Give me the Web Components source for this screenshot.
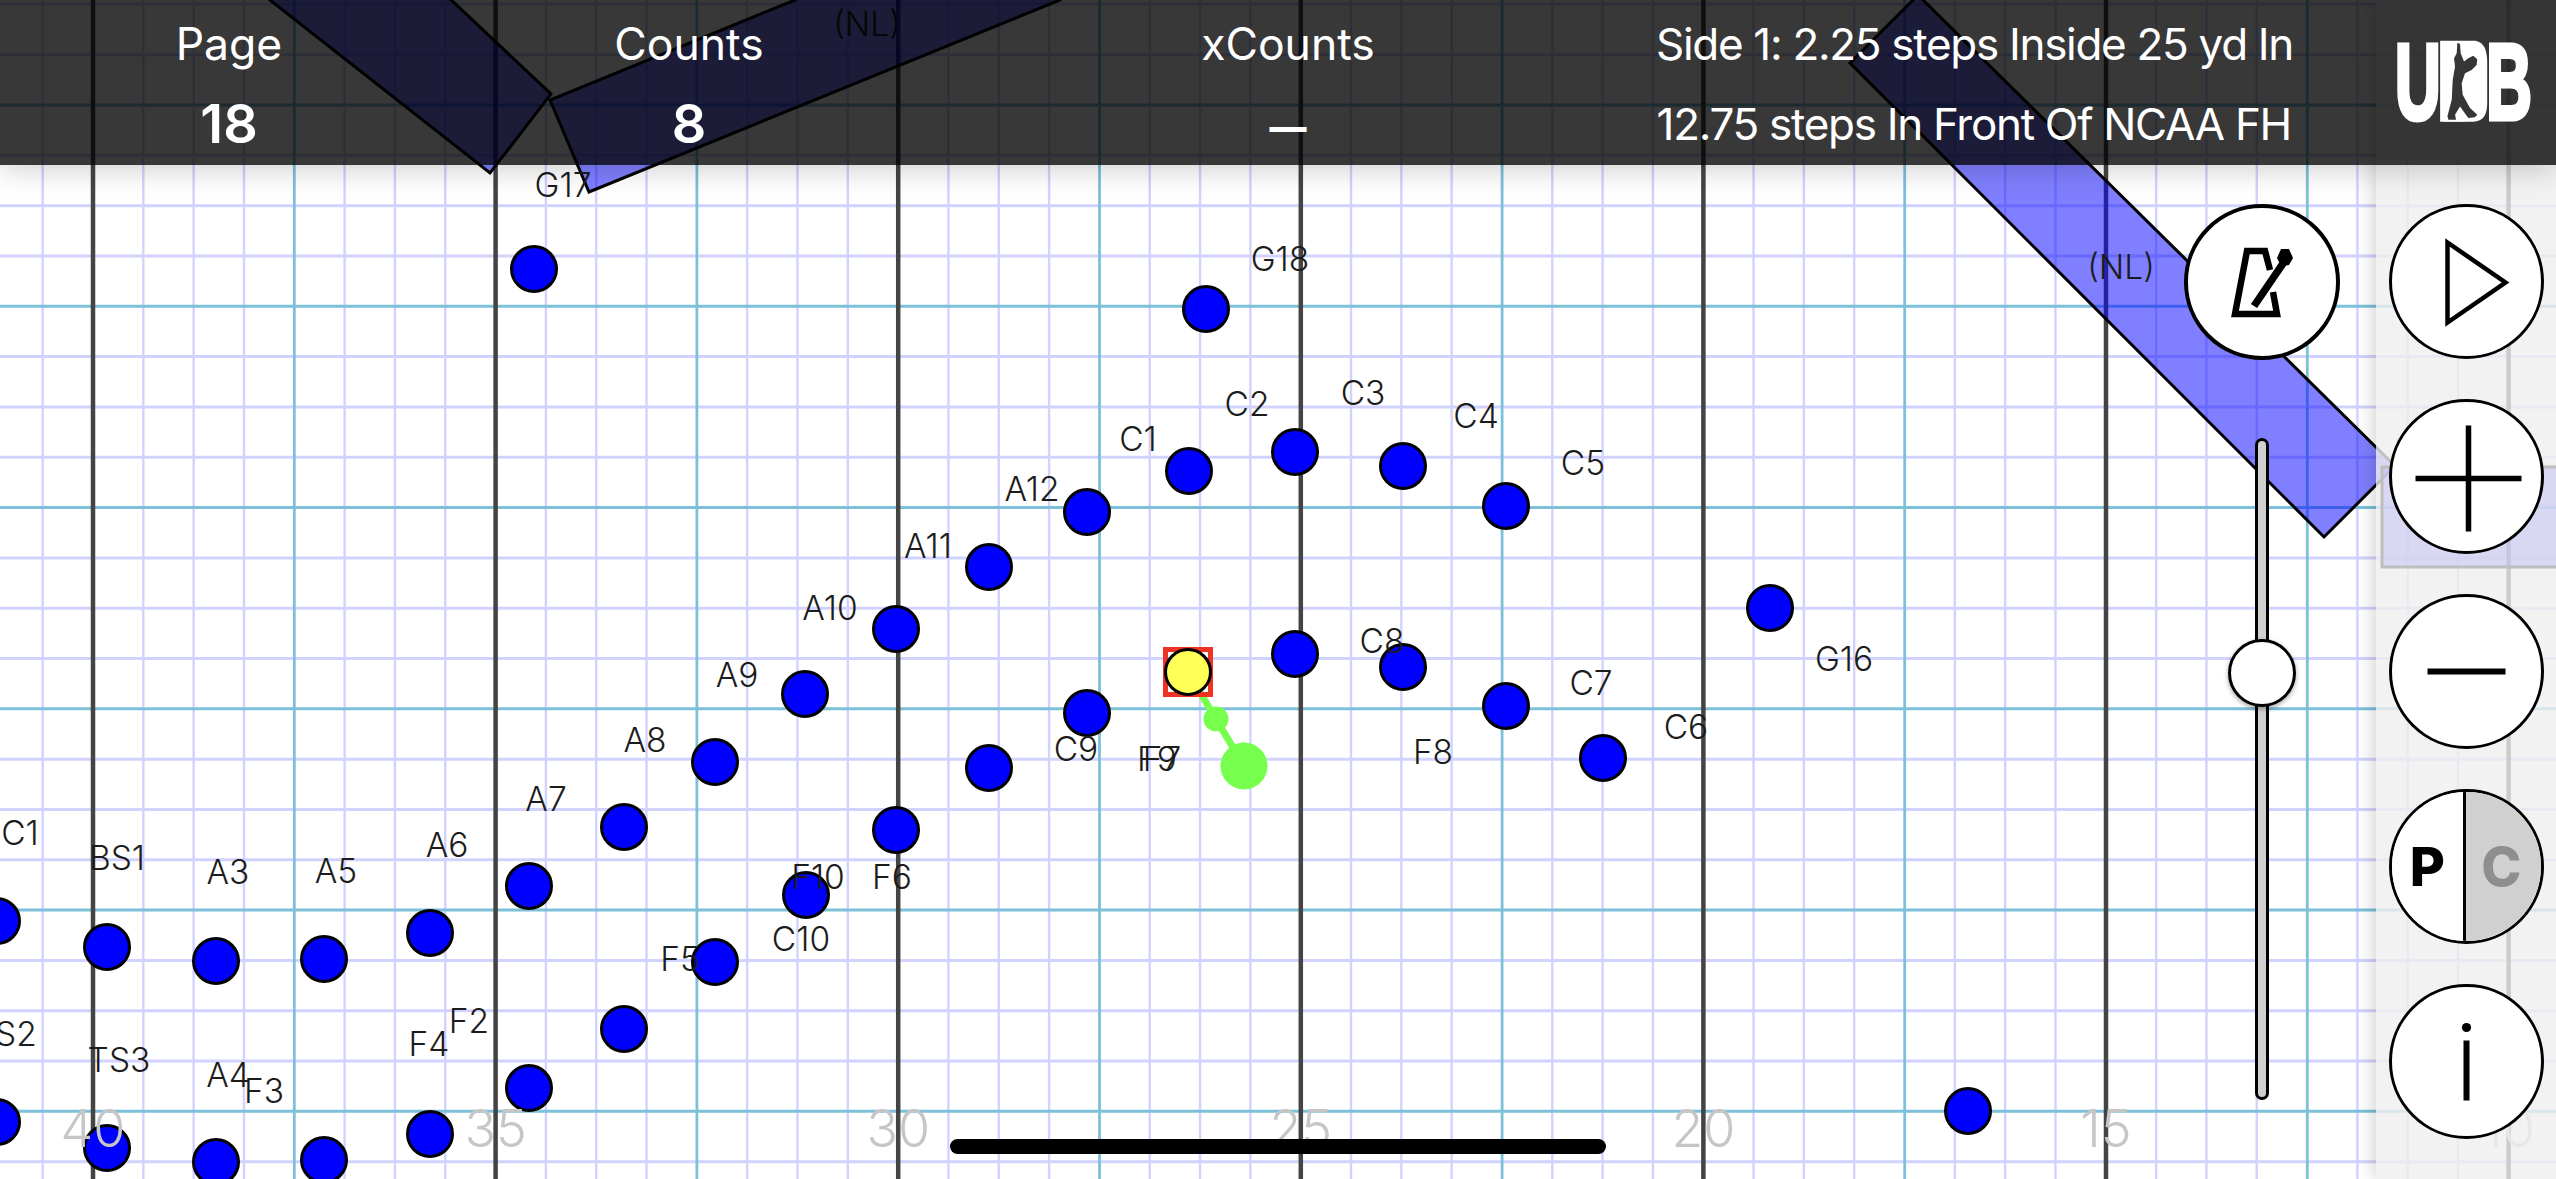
<!DOCTYPE html>
<html>
<head>
<meta charset="utf-8">
<title>UDB drill</title>
<style>
    html, body {
        margin: 0;
        padding: 0;
        width: 2556px;
        height: 1179px;
        overflow: hidden;
        background: #fff;
        font-family: Inter, "Liberation Sans", sans-serif;
    }
</style>
</head>
<body>
<drill-app></drill-app>

<script>
const XS = [93, 495.6, 898.2, 1300.8, 1703.4, 2106, 2508.6];
const STEP = 50.32;

// performers: x, y
const DOTS = [
    [534,269],[1206,309],[1189,471],[1295,452],[1403,466],[1506,506],[1087,512],[989,567],[896,629],
    [805,694],[715,762],[624,827],[529,886],[430,933],[324,959],[216,961],[107,947],[-3,921],
    [1295,654],[1403,667],[1506,706],[1603,758],[1770,608],[1087,713],[989,768],[896,830],[806,895],
    [715,962],[624,1029],[529,1088],[430,1134],[324,1160],[216,1162],[107,1148],[-3,1122],[1968,1111]
];

// label, center x, center y
const LABELS = [
    ['G17',563,185],['G18',1280,259],['C1',1138,439],['C2',1247,404],['C3',1363,393],['C4',1476,416],
    ['C5',1583,463],['A12',1032,489],['A11',928,546],['A10',830,608],['A9',737,675],['A8',645,740],
    ['A7',546,799],['A6',447,845],['A5',336,871],['A3',228,872],['BS1',117,858],['C1',20,833],
    ['C8',1382,641],['C7',1591,683],['C6',1686,727],['G16',1844,659],['F8',1433,752],['F7',1162,759],
    ['F9',1157,759],['C9',1076,749],['F6',892,877],['F10',818,877],['C10',801,939],['F5',680,959],
    ['F2',469,1021],['F4',429,1044],['F3',264,1091],['A4',228,1075],['TS3',119,1060],['BS2',5,1034],
    ['(NL)',2121,267],['(NL)',867,24]
];

const YARDS = ['40', '35', '30', '25', '20', '15', '10'];

const FORMS = [
    '270,0 490,173 551,94 430,-20 270,-20',
    '550,100 589,192 1060,0 1060,-20 795,-20 795,0',
    '1850,63 1918,-5 2395,466 2324,537',
    '2382,467 2620,467 2620,567 2382,567'
];

class DrillField extends HTMLElement {
    connectedCallback() {
        let lines = '';
        // thin lines first so the teal and dark ones sit on top
        for (let k = -1; k < 52; k++) {
            const x = 93 + (k - 2) * STEP;
            if (k % 4 !== 2) lines += `<line x1="${x}" x2="${x}" y1="0" y2="1179" class="thin"/>`;
        }
        for (let k = -2; k < 24; k++) {
            const y = 105 + k * STEP;
            if (k % 4 !== 0) lines += `<line y1="${y}" y2="${y}" x1="0" x2="2556" class="thin wide"/>`;
        }
        for (let k = 0; k < 7; k++) {
            const x = 294.3 + (k - 1) * 402.6;
            lines += `<line x1="${x}" x2="${x}" y1="0" y2="1179" class="teal"/>`;
        }
        for (let k = 0; k < 6; k++) {
            const y = 105 + k * 201.25;
            lines += `<line y1="${y}" y2="${y}" x1="0" x2="2556" class="teal"/>`;
        }
        XS.forEach(x => {
            lines += `<line x1="${x}" x2="${x}" y1="0" y2="1179" class="dark"/>`;
        });

        const forms = FORMS.map(p => `<polygon points="${p}" class="form"/>`).join('');
        const dots = DOTS.map(d => `<circle cx="${d[0]}" cy="${d[1]}" r="22.5" class="dot"/>`).join('');
        const labels = LABELS.map(l => `<text x="${l[1]}" y="${l[2]}" class="label">${l[0]}</text>`).join('');
        const yards = YARDS.map((t, i) => `<text x="${XS[i]}" y="1128" class="yard">${t}</text>`).join('');

        this.attachShadow({ mode: 'open' }).innerHTML = `
            <style>
                :host { display: block; width: 2556px; height: 1179px; }
                svg { display: block; }
                .thin { stroke: #d2d2ff; stroke-width: 2.4; }
                .wide { stroke-width: 3; }
                .teal { stroke: #7cc0da; stroke-width: 2.8; }
                .dark { stroke: #444; stroke-width: 4.5; }
                .form { fill: rgba(0, 0, 255, .5); stroke: #000; stroke-width: 3; }
                .dot { fill: #00f; stroke: #000; stroke-width: 3; }
                text { font-family: Inter, "Liberation Sans", sans-serif; text-anchor: middle; dominant-baseline: central; }
                .label { font-size: 33.5px; font-weight: 300; fill: #1c1c1c; }
                .yard { font-size: 52px; font-weight: 300; fill: #c6c6c6; }
            </style>
            <svg width="2556" height="1179" viewBox="0 0 2556 1179">
                ${lines}
                ${forms}
                <path d="M1188 672L1244 766" stroke="#77ff4d" stroke-width="7"/>
                <circle cx="1216" cy="719" r="12.5" fill="#77ff4d"/>
                <circle cx="1244" cy="766" r="23.5" fill="#77ff4d"/>
                ${dots}
                <rect x="1165.5" y="649.5" width="45" height="45" fill="none" stroke="#ee3524" stroke-width="5"/>
                <circle cx="1188" cy="672" r="22.5" fill="#ffff55" stroke="#000" stroke-width="3"/>
                ${labels}
                ${yards}
            </svg>
        `;
    }
}
customElements.define('drill-field', DrillField);

const statTemplate = document.createElement('template');
statTemplate.innerHTML = `
    <style>
        :host {
            display: flex;
            flex-direction: column;
            align-items: center;
            color: #fff;
        }
        .name {
            font-size: 44.5px;
            line-height: 88px;
            font-weight: 400;
        }
        .value {
            font-size: 54px;
            line-height: 72px;
            font-weight: 600;
        }
    </style>
    <div class="name"><slot name="name"></slot></div>
    <div class="value"><slot name="value"></slot></div>
`;
class StatCell extends HTMLElement {
    connectedCallback() {
        this.attachShadow({ mode: 'open' }).appendChild(statTemplate.content.cloneNode(true));
    }
}
customElements.define('stat-cell', StatCell);

const logoTemplate = document.createElement('template');
logoTemplate.innerHTML = `
    <style>
        :host {
            display: block;
            position: relative;
            width: 136px;
            height: 83px;
        }
        .word {
            position: absolute;
            left: -2px;
            top: -23px;
            font: bold 108px/130px "Liberation Sans", sans-serif;
            color: #fff;
            -webkit-text-stroke: 5px #fff;
            transform: scaleX(.585);
            transform-origin: 0 0;
            white-space: nowrap;
        }
        svg { position: absolute; left: 0; top: 0; }
    </style>
    <div class="word">UDB</div>
    <svg width="136" height="83" viewBox="170 60 410 250">
        <path d="M300 62H400C432 62 442 90 442 130V250C442 285 430 306 400 306H300Z" fill="#fff"/>
        <path d="M352 68L360 72 362 100 372 125 385 115 400 107 412 118 410 135 395 150 375 160 365 190 368 225 390 265 412 285 405 293 385 295 360 260 345 285 348 300 325 300 322 290 335 240 338 180 345 140 342 115 350 100Z" fill="#363636"/>
    </svg>
`;
class UdbLogo extends HTMLElement {
    connectedCallback() {
        this.attachShadow({ mode: 'open' }).appendChild(logoTemplate.content.cloneNode(true));
    }
}
customElements.define('udb-logo', UdbLogo);

const barTemplate = document.createElement('template');
barTemplate.innerHTML = `
    <style>
        :host {
            display: grid;
            grid-template-columns: 458px 462px 736px 635px 106px 136px;
            position: absolute;
            left: 0;
            top: 0;
            width: 2556px;
            height: 165px;
            background: rgba(0, 0, 0, .78);
            box-shadow: 0 2px 30px rgba(0, 0, 0, .22);
            color: #fff;
        }
        .side {
            grid-column: 4;
            text-align: right;
            font-size: 44px;
            letter-spacing: -1.3px;
            line-height: 80px;
            padding-top: 4px;
            white-space: nowrap;
        }
        udb-logo {
            grid-column: 6;
            margin-top: 40px;
        }
        .dash { font-size: 37px; font-weight: 800; vertical-align: 3px; }
    </style>
    <stat-cell><span slot="name">Page</span><span slot="value">18</span></stat-cell>
    <stat-cell><span slot="name">Counts</span><span slot="value">8</span></stat-cell>
    <stat-cell><span slot="name">xCounts</span><span slot="value" class="dash">—</span></stat-cell>
    <div class="side">
        <div>Side 1: 2.25 steps Inside 25 yd In</div>
        <div>12.75 steps In Front Of NCAA FH</div>
    </div>
    <udb-logo></udb-logo>
`;
class TopBar extends HTMLElement {
    connectedCallback() {
        this.attachShadow({ mode: 'open' }).appendChild(barTemplate.content.cloneNode(true));
    }
}
customElements.define('top-bar', TopBar);

const buttonTemplate = document.createElement('template');
buttonTemplate.innerHTML = `
    <style>
        :host {
            display: flex;
            align-items: center;
            justify-content: center;
            box-sizing: border-box;
            width: var(--size, 155px);
            height: var(--size, 155px);
            flex: none;
            border-radius: 50%;
            border: var(--ring, 3px) solid #000;
            background: #fff;
            overflow: hidden;
        }
    </style>
    <slot></slot>
`;
class RoundButton extends HTMLElement {
    connectedCallback() {
        this.attachShadow({ mode: 'open' }).appendChild(buttonTemplate.content.cloneNode(true));
    }
}
customElements.define('round-button', RoundButton);

const pcTemplate = document.createElement('template');
pcTemplate.innerHTML = `
    <style>
        :host {
            display: grid;
            grid-template-columns: 1fr 1fr;
            box-sizing: border-box;
            width: 155px;
            height: 155px;
            flex: none;
            border-radius: 50%;
            border: 3px solid #000;
            overflow: hidden;
            font-size: 54px;
            font-weight: 800;
        }
        div {
            display: flex;
            align-items: center;
            justify-content: center;
        }
        .p { background: #fff; color: #000; border-right: 3px solid #000; }
        .c { background: #d0d0d0; color: #8e8e8e; padding-right: 4px; }
    </style>
    <div class="p">P</div>
    <div class="c">C</div>
`;
class PcToggle extends HTMLElement {
    connectedCallback() {
        this.attachShadow({ mode: 'open' }).appendChild(pcTemplate.content.cloneNode(true));
    }
}
customElements.define('pc-toggle', PcToggle);

const panelTemplate = document.createElement('template');
panelTemplate.innerHTML = `
    <style>
        :host {
            display: flex;
            flex-direction: column;
            align-items: center;
            gap: 40px;
            box-sizing: border-box;
            position: absolute;
            right: 0;
            top: 0;
            width: 180px;
            height: 1179px;
            padding-top: 204px;
            background: rgba(239, 239, 239, .8);
            box-shadow: 0 0 20px rgba(0, 0, 0, .22);
        }
    </style>
    <round-button>
        <svg width="149" height="149" viewBox="-74.5 -74.5 149 149">
            <path d="M-19 -39L39 1L-19 41Z" fill="none" stroke="#000" stroke-width="4.5"/>
        </svg>
    </round-button>
    <round-button>
        <svg width="149" height="149" viewBox="-74.5 -74.5 149 149">
            <path d="M-51 2H55M2 -51V55" fill="none" stroke="#000" stroke-width="5.5"/>
        </svg>
    </round-button>
    <round-button>
        <svg width="149" height="149" viewBox="-74.5 -74.5 149 149">
            <path d="M-39 0H39" fill="none" stroke="#000" stroke-width="6"/>
        </svg>
    </round-button>
    <pc-toggle></pc-toggle>
    <round-button>
        <svg width="149" height="149" viewBox="-74.5 -74.5 149 149">
            <circle cx="0" cy="-34" r="4.6" fill="#000"/>
            <rect x="-3" y="-21" width="6" height="60" fill="#000"/>
        </svg>
    </round-button>
`;
class SidePanel extends HTMLElement {
    connectedCallback() {
        this.attachShadow({ mode: 'open' }).appendChild(panelTemplate.content.cloneNode(true));
    }
}
customElements.define('side-panel', SidePanel);

const sliderTemplate = document.createElement('template');
sliderTemplate.innerHTML = `
    <style>
        :host {
            display: block;
            position: relative;
            box-sizing: border-box;
            width: 14px;
            height: 662px;
            background: #d0d0d0;
            border: 3px solid #000;
            border-radius: 7px;
        }
        .thumb {
            position: absolute;
            left: 50%;
            top: 198px;
            width: 68px;
            height: 68px;
            box-sizing: border-box;
            margin-left: -34px;
            border-radius: 50%;
            background: #fff;
            border: 3px solid #000;
            box-shadow: 0 2px 5px rgba(0, 0, 0, .35);
        }
    </style>
    <div class="thumb"></div>
`;
class TempoSlider extends HTMLElement {
    connectedCallback() {
        this.attachShadow({ mode: 'open' }).appendChild(sliderTemplate.content.cloneNode(true));
    }
}
customElements.define('tempo-slider', TempoSlider);

const toolsTemplate = document.createElement('template');
toolsTemplate.innerHTML = `
    <style>
        :host {
            display: flex;
            flex-direction: column;
            align-items: center;
            gap: 78px;
            position: absolute;
            left: 2184px;
            top: 204px;
            width: 156px;
        }
        round-button { --size: 156px; --ring: 4px; }
    </style>
    <round-button>
        <svg width="148" height="148" viewBox="-74 -74 148 148">
            <path d="M8 -12L3 -31H-15L-27 32H15L11 10" fill="none" stroke="#000" stroke-width="6.5"/>
            <path d="M-8 24L24 -23" fill="none" stroke="#000" stroke-width="7.5"/>
            <path d="M19 -33L27 -33 31 -24 27 -17 19 -16 15 -24Z" fill="#000"/>
        </svg>
    </round-button>
    <tempo-slider></tempo-slider>
`;
class ToolColumn extends HTMLElement {
    connectedCallback() {
        this.attachShadow({ mode: 'open' }).appendChild(toolsTemplate.content.cloneNode(true));
    }
}
customElements.define('tool-column', ToolColumn);

const homeTemplate = document.createElement('template');
homeTemplate.innerHTML = `
    <style>
        :host {
            display: block;
            position: absolute;
            left: 950px;
            top: 1139px;
            width: 656px;
            height: 15px;
            border-radius: 8px;
            background: #000;
        }
    </style>
`;
class HomeIndicator extends HTMLElement {
    connectedCallback() {
        this.attachShadow({ mode: 'open' }).appendChild(homeTemplate.content.cloneNode(true));
    }
}
customElements.define('home-indicator', HomeIndicator);

const appTemplate = document.createElement('template');
appTemplate.innerHTML = `
    <style>
        :host {
            display: block;
            position: relative;
            width: 2556px;
            height: 1179px;
            overflow: hidden;
        }
    </style>
    <drill-field></drill-field>
    <tool-column></tool-column>
    <side-panel></side-panel>
    <top-bar></top-bar>
    <home-indicator></home-indicator>
`;
class DrillApp extends HTMLElement {
    connectedCallback() {
        this.attachShadow({ mode: 'open' }).appendChild(appTemplate.content.cloneNode(true));
    }
}
customElements.define('drill-app', DrillApp);
</script>
</body>
</html>
